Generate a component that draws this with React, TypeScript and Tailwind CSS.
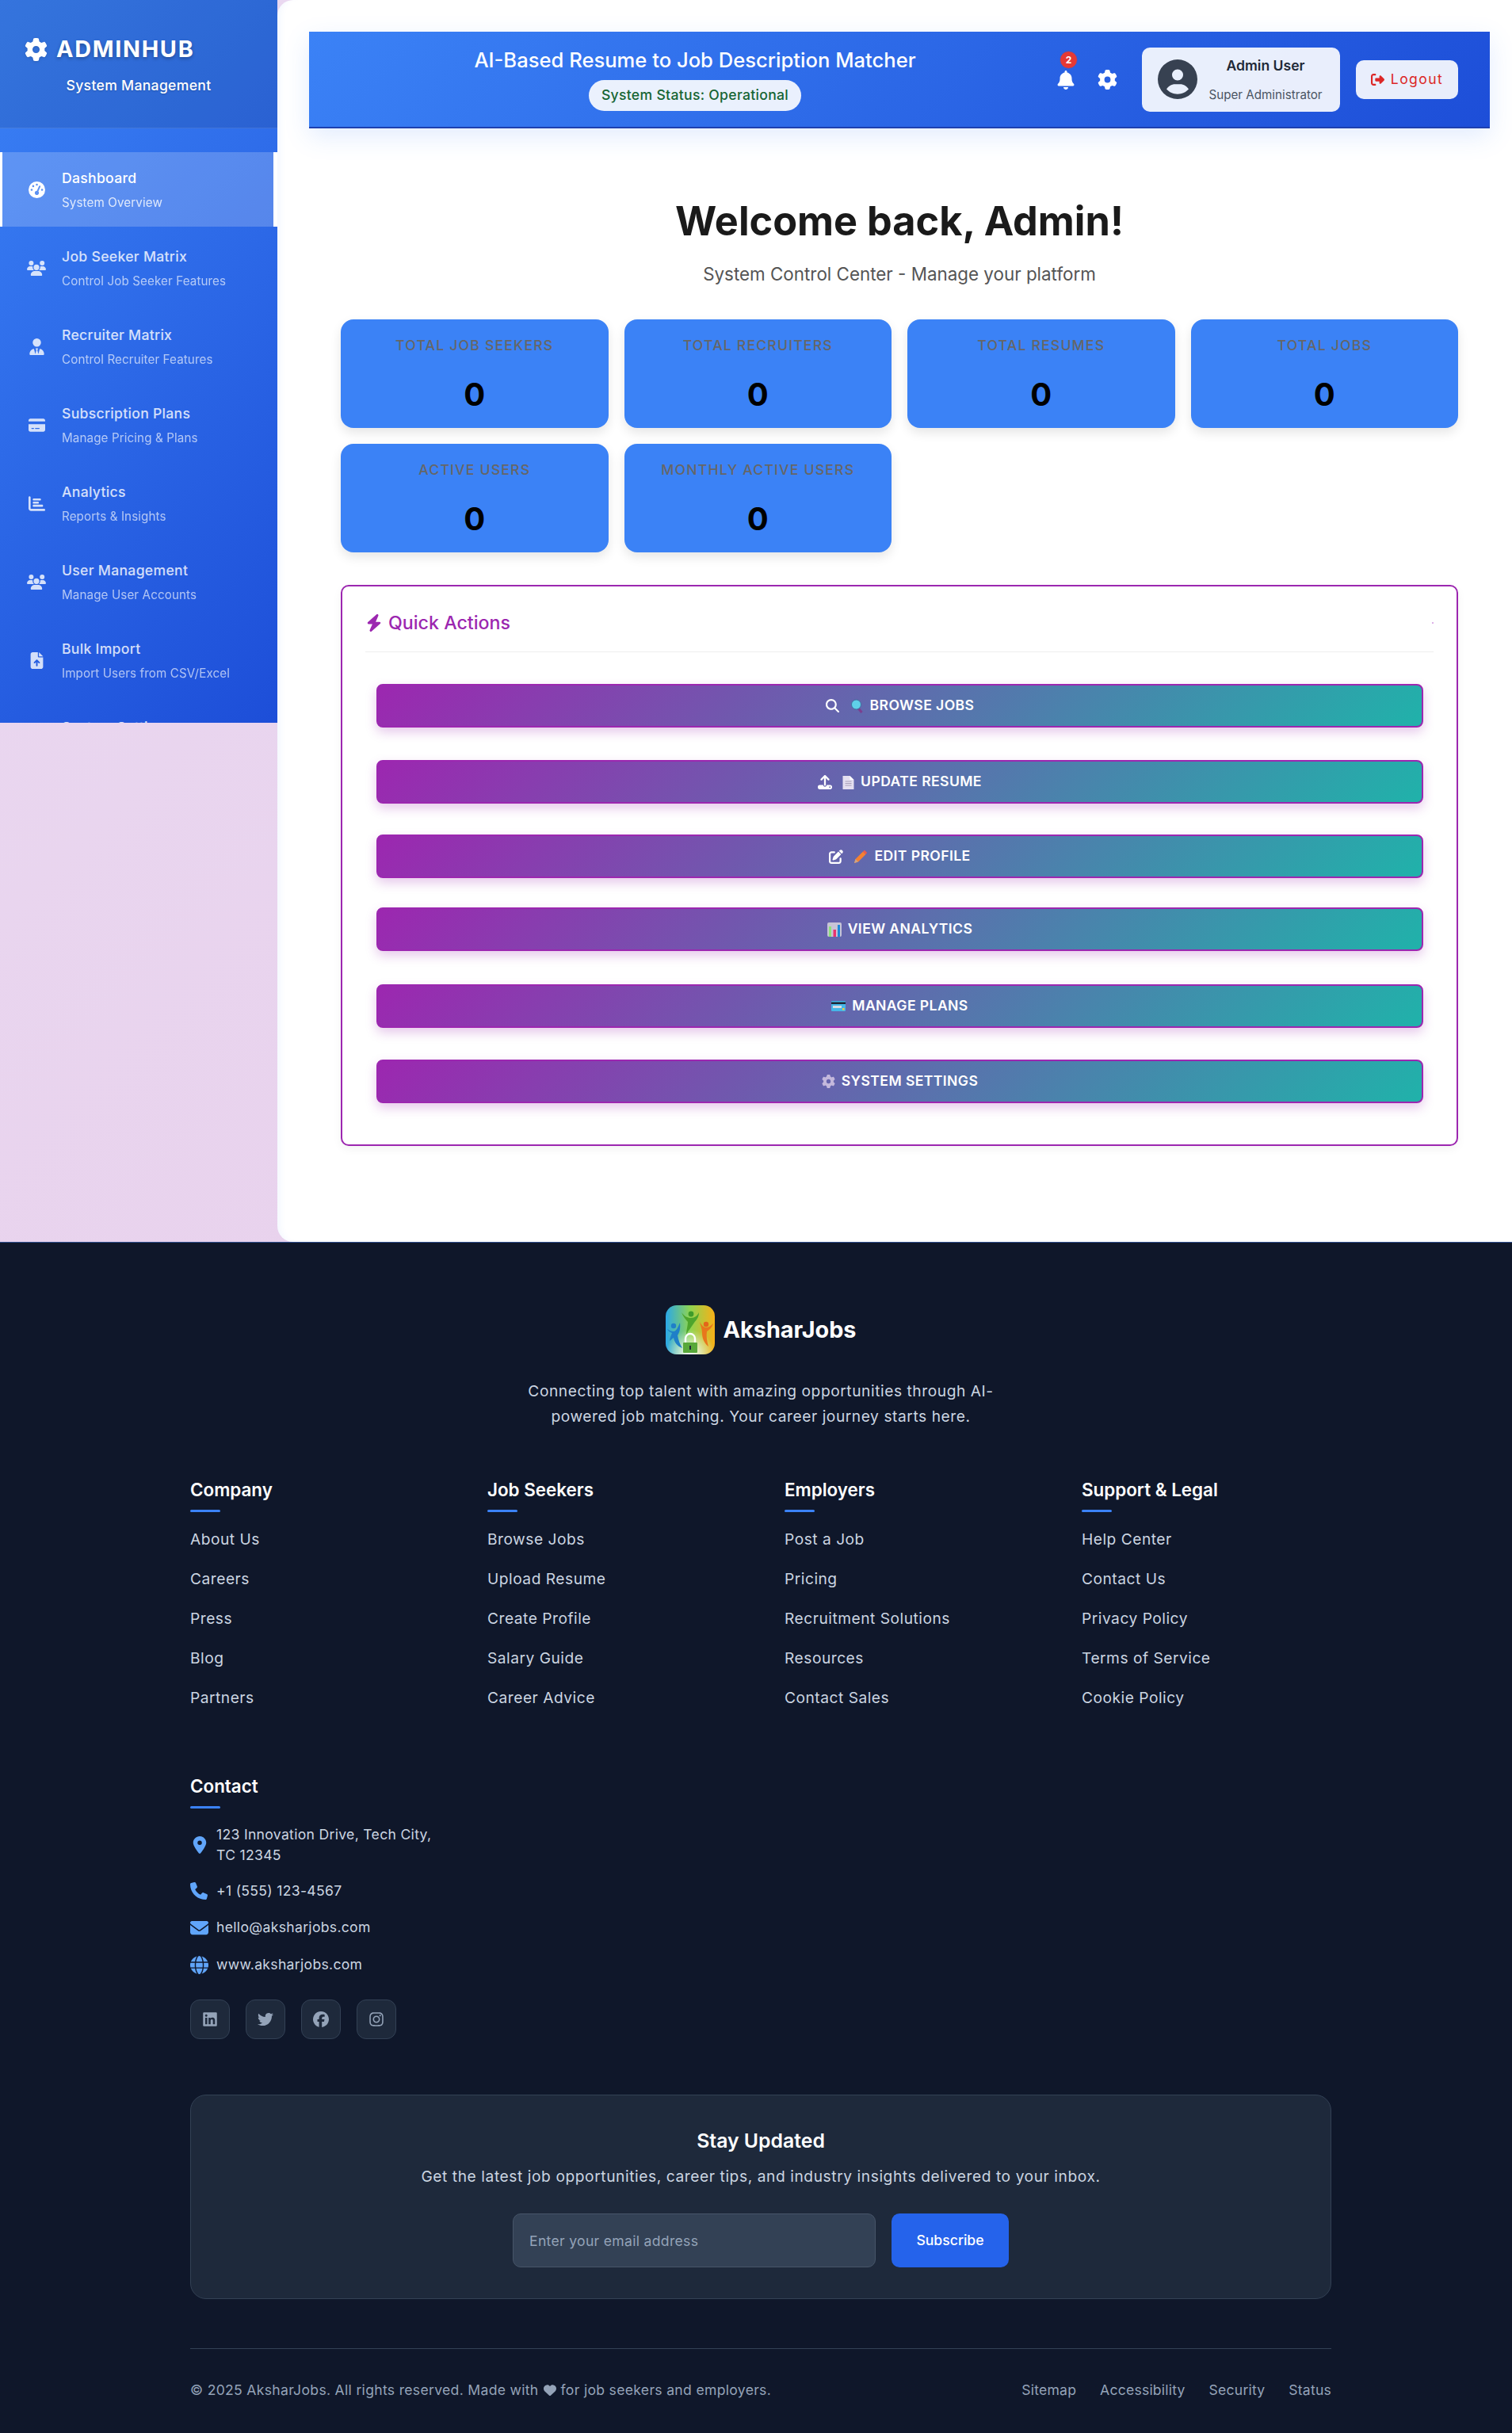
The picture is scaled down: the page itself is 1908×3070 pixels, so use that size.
import React from 'react'
import {
  FaBell, FaBolt, FaChartBar, FaCircleUser, FaCreditCard, FaEnvelope, FaFacebook, FaFileArrowUp, FaGaugeHigh,
  FaGear, FaGlobe, FaHeart, FaInstagram, FaLinkedin, FaLocationDot, FaMagnifyingGlass, FaPenToSquare, FaPhone,
  FaRightFromBracket, FaTwitter, FaUpload, FaUserTie, FaUsers,
} from 'react-icons/fa6'

const NAV = [
  { icon: FaGaugeHigh, title: 'Dashboard', sub: 'System Overview', active: true },
  { icon: FaUsers, title: 'Job Seeker Matrix', sub: 'Control Job Seeker Features' },
  { icon: FaUserTie, title: 'Recruiter Matrix', sub: 'Control Recruiter Features' },
  { icon: FaCreditCard, title: 'Subscription Plans', sub: 'Manage Pricing & Plans' },
  { icon: FaChartBar, title: 'Analytics', sub: 'Reports & Insights' },
  { icon: FaUsers, title: 'User Management', sub: 'Manage User Accounts' },
  { icon: FaFileArrowUp, title: 'Bulk Import', sub: 'Import Users from CSV/Excel' },
  { icon: FaGear, title: 'System Settings', sub: 'Configure Platform' },
]

const STATS = ['Total Job Seekers', 'Total Recruiters', 'Total Resumes', 'Total Jobs', 'Active Users', 'Monthly Active Users']

const COLUMNS = [
  { title: 'Company', links: ['About Us', 'Careers', 'Press', 'Blog', 'Partners'] },
  { title: 'Job Seekers', links: ['Browse Jobs', 'Upload Resume', 'Create Profile', 'Salary Guide', 'Career Advice'] },
  { title: 'Employers', links: ['Post a Job', 'Pricing', 'Recruitment Solutions', 'Resources', 'Contact Sales'] },
  { title: 'Support & Legal', links: ['Help Center', 'Contact Us', 'Privacy Policy', 'Terms of Service', 'Cookie Policy'] },
]

const EmojiSearch = () => (
  <svg width="17" height="18" viewBox="0 0 16 18">
    <line x1="9" y1="11" x2="14" y2="17" stroke="#7b3f8f" strokeWidth="3" />
    <circle cx="7" cy="7" r="6" fill="#5fd0e8" stroke="#3f6f9f" strokeWidth="1" />
  </svg>
)
const EmojiDoc = () => (
  <svg width="15" height="18" viewBox="0 0 14 18">
    <path d="M0 1h9l5 5v12H0z" fill="#e4dff0" />
    <path d="M9 1l5 5H9z" fill="#fff" />
    <path d="M3 8h8M3 10.5h8M3 13h8" stroke="#a9a0b8" strokeWidth="1" />
  </svg>
)
const EmojiPencil = () => (
  <svg width="18" height="18" viewBox="0 0 18 18">
    <path d="M1 17l1.5-5L12 2.5l3.5 3.5L6 15.5z" fill="#f58132" />
    <path d="M12 2.5L14 .8l3.2 3.2L15.5 6z" fill="#ef5a4a" />
    <path d="M1 17l1.5-5 3.5 3.5z" fill="#c9a58a" />
  </svg>
)
const EmojiChart = () => (
  <svg width="18" height="18" viewBox="0 0 18 18">
    <rect width="18" height="18" rx="2" fill="#c7c4d6" />
    <rect x="2" y="5" width="3" height="13" fill="#8ee07a" />
    <rect x="7.5" y="9" width="3.5" height="9" fill="#e8326e" />
    <rect x="13" y="3" width="3" height="15" fill="#1e88d8" />
  </svg>
)
const EmojiCard = () => (
  <svg width="18" height="13" viewBox="0 0 18 13">
    <rect width="18" height="13" rx="1" fill="#45b6e8" />
    <rect y="1.5" width="18" height="2.5" fill="#1f2937" />
    <rect x="2" y="6" width="11" height="3" fill="#d8dde4" />
    <rect x="14" y="9" width="2.5" height="2.5" fill="#f5c93a" />
  </svg>
)

const ACTIONS = [
  { y: 'mb-[41px]', label: 'Browse Jobs', before: <><FaMagnifyingGlass className="text-white text-[17px]" /><span className="w-[14px]" /><EmojiSearch /></> },
  { y: 'mb-[39px]', label: 'Update Resume', before: <><FaUpload className="text-white text-[18px]" /><span className="w-[13px]" /><EmojiDoc /></> },
  { y: 'mb-[37px]', label: 'Edit Profile', before: <><FaPenToSquare className="text-white text-[18px]" /><span className="w-[13px]" /><EmojiPencil /></> },
  { y: 'mb-[42px]', label: 'View Analytics', before: <EmojiChart /> },
  { y: 'mb-[40px]', label: 'Manage Plans', before: <EmojiCard /> },
  { y: '', label: 'System Settings', before: <FaGear className="text-[#c4b8dc] text-[17px]" /> },
]

const Logo = () => (
  <svg width="62" height="62" viewBox="0 0 62 62">
    <defs>
      <linearGradient id="logoBg" x1="0" y1="0" x2="1" y2="0">
        <stop offset="0" stopColor="#2aa8e8" />
        <stop offset="0.5" stopColor="#8fd450" />
        <stop offset="1" stopColor="#f8b018" />
      </linearGradient>
      <radialGradient id="logoGlow" cx="0.5" cy="1" r="0.5">
        <stop offset="0" stopColor="#ffffff" />
        <stop offset="1" stopColor="#ffffff" stopOpacity="0" />
      </radialGradient>
    </defs>
    <rect width="62" height="62" rx="14" fill="url(#logoBg)" />
    <rect width="62" height="62" rx="14" fill="url(#logoGlow)" />
    <circle cx="32" cy="11" r="3.4" fill="#3f9b2a" />
    <path d="M20 9c4 5 7 7 12 7s8-3 10-7c0 7-4 10-6 13-3 5-7 9-10 15 0-6 2-11 2-16-3-3-6-7-8-12z" fill="#4ea52c" />
    <circle cx="10" cy="26" r="3.2" fill="#1f7fc8" />
    <path d="M2 30c3 2 5 3 8 3 3 0 5-4 8-11 1 8-1 13-3 16 1 6 3 11 6 16-6-2-10-7-11-13-2 1-3 3-5 4 0-4 2-7 3-10-3-1-5-3-6-5z" fill="#1f7fc8" />
    <circle cx="51" cy="24" r="3.2" fill="#e3661a" />
    <path d="M43 21c3 5 5 7 8 7s6-2 9-5c-1 5-5 8-8 10-1 6 0 12 2 19-5-4-8-10-8-17 0-5-2-9-3-14z" fill="#e8761c" />
    <path d="M25 48v-6a6 6 0 0 1 12 0v6" fill="none" stroke="#fff" strokeWidth="2.4" />
    <rect x="22" y="47" width="18" height="13" rx="1" fill="#58a83a" />
    <rect x="30" y="51" width="2" height="5" fill="#1f2937" />
  </svg>
)

const App: React.FC = () => {
  return (
    <div className="font-['Inter',sans-serif] w-[1908px] h-[3070px] overflow-hidden">
      <div className="flex h-[1567px] bg-[linear-gradient(135deg,#ead9f1,#e7cdea)]">
        {/* sidebar, clipped in the screenshot */}
        <aside className="w-[350px] h-[912px] overflow-hidden shrink-0 bg-[linear-gradient(135deg,#3b82f6,#1d4ed8)] text-white">
          <div className="h-[162px] bg-black/10 border-b border-white/10 pt-[42px]">
            <div className="flex items-center pl-[31px]">
              <FaGear className="text-[29px] drop-shadow" />
              <h2 className="ml-[11px] text-[28.8px] leading-[40px] font-bold tracking-[1.7px] [text-shadow:0_2px_4px_rgba(0,0,0,0.3)]">ADMINHUB</h2>
            </div>
            <p className="text-center text-[17.6px] leading-[24px] font-medium tracking-[0.3px] mt-[14px] [text-shadow:0_1px_2px_rgba(0,0,0,0.2)]">System Management</p>
          </div>
          <nav className="pt-[30px]">
            {NAV.map((item) => (
              <div
                key={item.title}
                className={item.active
                  ? 'flex items-center h-[94px] mb-[5px] pl-[31px] bg-white/20 border-l-[3px] border-r-[5px] border-white text-white'
                  : 'flex items-center h-[94px] mb-[5px] pl-[34px] text-white/80'}
              >
                <div className="w-[24px] flex justify-center"><item.icon className={item.icon === FaUsers ? 'text-[25px]' : 'text-[21px]'} /></div>
                <div className="ml-[20px]">
                  <div className="text-[17.6px] leading-[24px] font-medium tracking-[0.3px]">{item.title}</div>
                  <div className="text-[15.2px] leading-[20px] tracking-[0.1px] mt-[9px] opacity-80">{item.sub}</div>
                </div>
              </div>
            ))}
          </nav>
        </aside>

        <main className="flex-1 min-w-0 bg-white rounded-l-[20px] pt-[40px] pl-[40px] pr-[28px] shadow-[inset_10px_0_10px_-8px_rgba(59,130,246,0.08)]">
          <header className="h-[122px] flex items-center bg-[linear-gradient(135deg,#3b82f6,#1d4ed8)] border-b-2 border-[#1e40af] shadow-[0_10px_30px_rgba(59,130,246,0.15)] pr-[40px]">
            <div className="w-[912px] ml-[31px] flex flex-col items-center">
              <h1 className="text-[25.6px] leading-[32px] font-medium text-white">AI-Based Resume to Job Description Matcher</h1>
              <div className="mt-[9px] h-[39px] px-[16px] rounded-full bg-white/90 flex items-center text-[17.6px] tracking-[0.3px] font-medium text-[#166534]">System Status: Operational</div>
            </div>
            <div className="ml-auto flex items-center">
              <div className="relative text-white">
                <FaBell className="text-[24px] mt-[2px]" />
                <span className="absolute top-[-23px] left-[4px] w-[23px] h-[23px] rounded-full bg-[#e53935] border border-[#2f5fd8] flex items-center justify-center text-[12px] font-bold text-white">2</span>
              </div>
              <FaGear className="text-white text-[25px] ml-[28px]" />
              <div className="ml-[31px] w-[250px] h-[81px] rounded-[10px] bg-white/90 flex items-center pl-[20px]">
                <FaCircleUser className="text-[#374151] text-[50px] shrink-0" />
                <div className="flex-1 text-center pr-[8px]">
                  <div className="text-[17.6px] leading-[24px] font-semibold text-[#1f2937]">Admin User</div>
                  <div className="text-[15.2px] leading-[20px] mt-[15px] text-[#4b5563]">Super Administrator</div>
                </div>
              </div>
              <button className="ml-[20px] w-[129px] h-[49px] rounded-[10px] bg-white/90 flex items-center justify-center text-[17.6px] tracking-[1.4px] text-[#dc2626]">
                <FaRightFromBracket className="mr-[8px] text-[17px]" />Logout
              </button>
            </div>
          </header>

          <div className="pl-[40px] pr-[40px]">
            <h1 className="mt-[86px] text-center text-[50.4px] leading-[62px] font-bold text-[#1a1a1a]">Welcome back, Admin!</h1>
            <p className="mt-[22px] text-center text-[22.4px] leading-[28px] text-[#555555]">System Control Center - Manage your platform</p>

            <div className="mt-[43px] grid grid-cols-4 gap-x-[20px] gap-y-[20px]">
              {STATS.map((label) => (
                <div key={label} className="h-[137px] rounded-[16px] bg-[#3b82f6] shadow-[0_6px_14px_rgba(0,0,0,0.1)] flex flex-col items-center pt-[21px]">
                  <div className="text-[17.6px] leading-[24px] font-medium uppercase tracking-[1.2px] text-[#666666]">{label}</div>
                  <div className="mt-[26px] text-[40px] leading-[48px] font-bold text-black">0</div>
                </div>
              ))}
            </div>

            <section className="mt-[41px] h-[708px] rounded-[10px] border-2 border-[#9c27b0] shadow-[0_4px_12px_rgba(0,0,0,0.05)] px-[29px]">
              <div className="h-[83px] border-b border-[#eeeeee] flex items-center pt-[10px]">
                <FaBolt className="text-[#9c27b0] text-[22px] mr-[7px]" />
                <h3 className="text-[23.2px] font-medium text-[#9c27b0]">Quick Actions</h3>
                <span className="ml-auto w-[2px] h-[2px] bg-[#dcb0e8]" />
              </div>
              <div className="mt-[40px] ml-[14px] mr-[13px]">
                {ACTIONS.map((action) => (
                  <button
                    key={action.label}
                    className={`w-full h-[55px] flex items-center justify-center rounded-[8px] border-2 border-[#9c27b0] bg-[linear-gradient(135deg,#9c27b0,#20b2aa)] shadow-[0_6px_14px_rgba(156,39,176,0.25)] text-white text-[17.6px] tracking-[0.4px] font-semibold uppercase ${action.y}`}
                  >
                    <span className="flex items-center mr-[8px]">{action.before}</span>
                    {action.label}
                  </button>
                ))}
              </div>
            </section>
          </div>
        </main>
      </div>

      <footer className="h-[1503px] bg-[#0f172a] border-t border-[#2f4f8f] pt-[79px]">
        <div className="w-[1440px] ml-[240px]">
          <div className="flex flex-col items-center">
            <div className="flex items-center">
              <Logo />
              <span className="ml-[11px] text-[28.8px] leading-[40px] font-bold text-white">AksharJobs</span>
            </div>
            <p className="mt-[30px] w-[600px] text-center text-[19.2px] tracking-[0.55px] leading-[32px] text-[#cbd5e1]">Connecting top talent with amazing opportunities through AI-powered job matching. Your career journey starts here.</p>
          </div>

          <div className="mt-[62px] grid grid-cols-4 gap-x-[60px]">
            {COLUMNS.map((col) => (
              <div key={col.title}>
                <h4 className="text-[22.4px] leading-[30px] font-semibold text-white">{col.title}</h4>
                <div className="w-[38px] h-[3px] rounded-sm bg-[#3b82f6] mt-[10px] mb-[22px]" />
                {col.links.map((link) => (
                  <div key={link} className="h-[50px] leading-[24px] text-[19.2px] tracking-[0.5px] text-[#cbd5e1]">{link}</div>
                ))}
              </div>
            ))}
          </div>

          <div className="mt-[59px] w-[315px]">
            <h4 className="text-[22.4px] leading-[30px] font-semibold text-white">Contact</h4>
            <div className="w-[38px] h-[3px] rounded-sm bg-[#3b82f6] mt-[10px] mb-[20px]" />
            <div className="flex items-center text-[17.6px] tracking-[0.3px] leading-[25.6px] text-[#cbd5e1]">
              <span className="w-[23px] flex justify-center shrink-0 mr-[10px]"><FaLocationDot className="text-[#60a5fa] text-[22px]" /></span>
              <span>123 Innovation Drive, Tech City, TC 12345</span>
            </div>
            <div className="mt-[20px] flex items-center text-[17.6px] tracking-[0.3px] leading-[26px] text-[#cbd5e1]">
              <span className="w-[23px] shrink-0 mr-[10px]"><FaPhone className="text-[#60a5fa] text-[22px]" /></span>+1 (555) 123-4567
            </div>
            <div className="mt-[20px] flex items-center text-[17.6px] tracking-[0.3px] leading-[26px] text-[#cbd5e1]">
              <span className="w-[23px] shrink-0 mr-[10px]"><FaEnvelope className="text-[#60a5fa] text-[23px]" /></span>hello@aksharjobs.com
            </div>
            <div className="mt-[21px] flex items-center text-[17.6px] tracking-[0.3px] leading-[26px] text-[#cbd5e1]">
              <span className="w-[23px] shrink-0 mr-[10px]"><FaGlobe className="text-[#60a5fa] text-[23px]" /></span>www.aksharjobs.com
            </div>
            <div className="mt-[31px] flex gap-[20px]">
              {[FaLinkedin, FaTwitter, FaFacebook, FaInstagram].map((Icon, i) => (
                <div key={i} className="w-[50px] h-[50px] rounded-[12px] bg-[#1e293b] border border-[#334155] flex items-center justify-center">
                  <Icon className="text-[#94a3b8] text-[20px]" />
                </div>
              ))}
            </div>
          </div>

          <div className="mt-[70px] h-[258px] rounded-[20px] bg-[#1e293b] border border-[#334155] flex flex-col items-center pt-[41px]">
            <h3 className="text-[24.8px] leading-[32px] font-semibold text-white">Stay Updated</h3>
            <p className="mt-[15px] text-[19.2px] tracking-[0.57px] leading-[28px] text-[#cbd5e1]">Get the latest job opportunities, career tips, and industry insights delivered to your inbox.</p>
            <div className="mt-[33px] flex gap-[20px]">
              <input placeholder="Enter your email address" className="w-[458px] h-[68px] rounded-[10px] bg-[#334155] border border-[#475569] px-[20px] text-[17.6px] tracking-[0.3px] placeholder:text-[#94a3b8]" />
              <button className="w-[148px] h-[68px] rounded-[10px] bg-[#2563eb] text-white text-[17.6px] font-medium">Subscribe</button>
            </div>
          </div>

          <div className="mt-[62px] border-t border-[#334155] pt-[40px] flex items-center justify-between text-[17.6px] tracking-[0.3px] leading-[24px] text-[#94a3b8]">
            <div className="flex items-center">© 2025 AksharJobs. All rights reserved. Made with <FaHeart className="mx-[6px] text-[16px]" /> for job seekers and employers.</div>
            <div className="flex gap-[30px] tracking-[0.2px]">
              {['Sitemap', 'Accessibility', 'Security', 'Status'].map((link) => <span key={link}>{link}</span>)}
            </div>
          </div>
        </div>
      </footer>
    </div>
  )
}

export default App
